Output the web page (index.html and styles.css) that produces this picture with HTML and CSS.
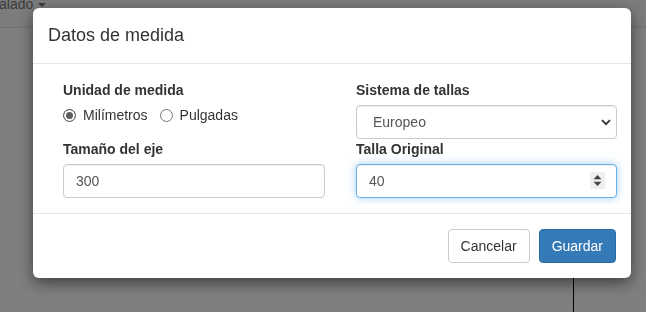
FILE: index.html
```html
<!DOCTYPE html>
<html lang="es">
<head>
<meta charset="utf-8">
<title>Datos de medida</title>
<link rel="stylesheet" href="styles.css">
</head>
<body>
<div class="page">
  <div class="navbar"><span class="nav-text">alado <span class="caret"></span></span></div>
  <div class="vline"></div>
</div>
<div class="backdrop"></div>
<div class="modal">
  <div class="modal-header"><h4 class="modal-title">Datos de medida</h4></div>
  <div class="modal-body">
    <div class="col">
      <label class="lbl">Unidad de medida</label>
      <div class="radios">
        <label class="radio"><span class="circle checked"></span>Milímetros</label>
        <label class="radio"><span class="circle"></span>Pulgadas</label>
      </div>
      <label class="lbl">Tamaño del eje</label>
      <input class="form-control" type="text" value="300">
    </div>
    <div class="col">
      <label class="lbl">Sistema de tallas</label>
      <div class="select-wrap">
        <select class="form-control select"><option>Europeo</option></select>
        <svg class="chevron" width="10" height="7" viewBox="0 0 10 7"><path d="M1 1.2 L5 5.2 L9 1.2" fill="none" stroke="#333" stroke-width="1.8"/></svg>
      </div>
      <label class="lbl lbl-tight">Talla Original</label>
      <div class="number-wrap">
        <input class="form-control focused" type="text" value="40">
        <span class="spinner"><svg width="9" height="13" viewBox="0 0 9 13"><path d="M4.5 1 L8.5 5.2 L0.5 5.2 Z M0.5 7.8 L8.5 7.8 L4.5 12 Z" fill="#444"/></svg></span>
      </div>
    </div>
  </div>
  <div class="modal-footer">
    <button class="btn btn-default" type="button">Cancelar</button>
    <button class="btn btn-primary" type="button">Guardar</button>
  </div>
</div>
</body>
</html>
```

FILE: styles.css
```css
* { box-sizing: border-box; }
html, body { margin: 0; padding: 0; }
body {
  font-family: "Liberation Sans", Arial, Helvetica, sans-serif;
  font-size: 14px;
  line-height: 20px;
  color: #333;
  background: #fff;
  width: 646px;
  height: 312px;
  overflow: hidden;
}
.page { position: relative; height: 312px; }
.navbar {
  height: 28px;
  background: #f8f8f8;
  border-bottom: 1px solid #e7e7e7;
  overflow: hidden;
}
.nav-text {
  display: block;
  margin-top: -6px;
  margin-left: -1px;
  color: #777;
  font-size: 14px;
  line-height: 20px;
}
.caret {
  display: inline-block;
  width: 0;
  height: 0;
  border-top: 4px solid #777;
  border-left: 4px solid transparent;
  border-right: 4px solid transparent;
  vertical-align: middle;
  margin-left: 1px;
}
.vline {
  position: absolute;
  left: 573px;
  top: 200px;
  width: 1px;
  height: 112px;
  background: #000;
}
.backdrop {
  position: fixed;
  inset: 0;
  background: rgba(0, 0, 0, 0.5);
}
.modal {
  position: fixed;
  left: 33px;
  top: 8px;
  width: 598px;
  background: #fff;
  border-radius: 6px;
  box-shadow: 0 5px 15px rgba(0, 0, 0, 0.5);
}
.modal-header {
  padding: 15px;
  border-bottom: 1px solid #e5e5e5;
}
.modal-title {
  margin: 0;
  font-size: 18px;
  font-weight: 500;
  line-height: 25px;
  color: #333;
}
.modal-body {
  padding: 16px 14px 15px 30px;
  display: grid;
  grid-template-columns: 262px 261px;
  column-gap: 31px;
}
.col { display: flex; flex-direction: column; }
.lbl {
  display: block;
  font-weight: bold;
  margin-bottom: 5px;
  line-height: 20px;
}
.radios {
  display: flex;
  gap: 12px;
  height: 20px;
  margin-bottom: 14px;
}
.radio {
  display: flex;
  align-items: flex-start;
  line-height: 20px;
}
.circle {
  width: 13px;
  height: 13px;
  margin: 4px 7px 0 0;
  border: 1px solid #767676;
  border-radius: 50%;
  background: #fff;
  flex: none;
}
.circle.checked {
  border-color: #5c5c5c;
  background: #5c5c5c;
  box-shadow: inset 0 0 0 2px #fff;
}
.form-control {
  display: block;
  width: 100%;
  height: 34px;
  padding: 6px 12px;
  font-family: inherit;
  font-size: 14px;
  line-height: 20px;
  color: #555;
  background: #fff;
  border: 1px solid #ccc;
  border-radius: 4px;
  box-shadow: inset 0 1px 1px rgba(0, 0, 0, 0.075);
  outline: none;
  margin: 0;
}
.focused {
  border-color: #66afe9;
  box-shadow: inset 0 1px 1px rgba(0, 0, 0, 0.075), 0 0 8px rgba(102, 175, 233, 0.6);
}
.select-wrap, .number-wrap { position: relative; }
.select {
  appearance: none;
  -webkit-appearance: none;
  padding-left: 16px;
}
.chevron {
  position: absolute;
  right: 6px;
  top: 14px;
}
.spinner {
  position: absolute;
  right: 12px;
  top: 8px;
  width: 15px;
  height: 17px;
  background: #efefef;
  display: flex;
  align-items: center;
  justify-content: center;
}
.modal-footer {
  padding: 15px;
  border-top: 1px solid #e5e5e5;
  display: flex;
  justify-content: flex-end;
  gap: 9px;
}
.btn {
  font-family: inherit;
  font-size: 14px;
  line-height: 20px;
  padding: 6px 12px;
  border-radius: 4px;
  border: 1px solid transparent;
  margin: 0;
  cursor: pointer;
}
.btn-default {
  color: #333;
  background: #fff;
  border-color: #ccc;
}
.btn-primary {
  color: #fff;
  background: #337ab7;
  border-color: #2e6da4;
}
```
